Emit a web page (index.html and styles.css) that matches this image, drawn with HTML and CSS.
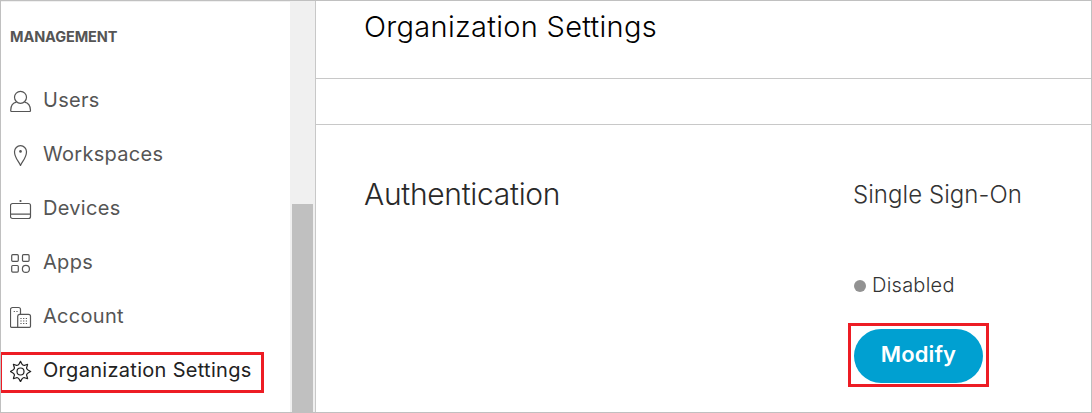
FILE: index.html
```html
<!DOCTYPE html>
<html lang="en">
<head>
<meta charset="utf-8">
<title>Organization Settings</title>
<link rel="stylesheet" href="styles.css">
</head>
<body>
<div class="app">
  <nav class="sidebar">
    <h2 class="group-title"><span>MANAGEMENT</span></h2>
    <a class="nav-item"><svg class="icon" viewBox="0 0 22 22"><circle cx="10.500" cy="7.300" r="6"/><path d="M6.500 12.200C3 12.800.8 15.700.7 20.500q0 1 1 1H19.500q1 0 1-1C20.400 15.700 18 12.800 14.500 12.200"/></svg><span>Users</span></a>
    <a class="nav-item"><svg class="icon" viewBox="0 0 22 22"><path d="M10.500 21.500C9 17.500 4.500 14 4.500 7.700a6 6 0 0 1 12 0C16.500 14 12 17.500 10.500 21.500Z"/><circle class="dot" cx="10.500" cy="7.400" r="1.300"/></svg><span>Workspaces</span></a>
    <a class="nav-item"><svg class="icon" viewBox="0 0 22 22"><path d="M2.500 5.500H18.500a2 2 0 0 1 2 2V18.500a2 2 0 0 1-2 2H2.500a2 2 0 0 1-2-2V7.500a2 2 0 0 1 2-2ZM.5 16.200H20.500"/><circle class="dot" cx="10.500" cy="3" r="1.100"/></svg><span>Devices</span></a>
    <a class="nav-item"><svg class="icon" viewBox="0 0 22 22"><rect x="1.700" y="2.700" width="6.600" height="6.600" rx="1"/><rect x="12.500" y="2.700" width="6.600" height="6.600" rx="1"/><rect x="1.700" y="13.500" width="6.600" height="6.600" rx="1"/><circle cx="15.900" cy="16.900" r="3.500"/></svg><span>Apps</span></a>
    <a class="nav-item"><svg class="icon" viewBox="0 0 22 22"><path d="M7.700 21.300H1.500a1 1 0 0 1-1-1V3.500A2 2 0 0 1 2.500 1.500H8.500a2 2 0 0 1 2 2V8.300M9.500 8.300h9a2 2 0 0 1 2 2v10a1 1 0 0 1-1 1H7.700v-11a2 2 0 0 1 1.800-2Z"/><path class="specks" d="M3.700 5.500h4.200M10.400 12.500h7.800M10.400 15h7.800M10.400 17.500h7.800"/></svg><span>Account</span></a>
    <a class="nav-item active"><svg class="icon" viewBox="0 0 22 22"><path d="M10.500 1.300L11.700 3.600Q13.300 6.300 15.400 5L17.600 4.400 17 6.600Q15.700 8.700 18.400 10.300L20.700 11.500 18.400 12.700Q15.700 14.300 17 16.400L17.600 18.600 15.400 18Q13.300 16.700 11.700 19.400L10.500 21.700 9.300 19.400Q7.700 16.700 5.600 18L3.400 18.600 4 16.400Q5.300 14.300 2.600 12.700L.3 11.500 2.600 10.300Q5.300 8.700 4 6.600L3.400 4.400 5.600 5Q7.700 6.300 9.300 3.600Z"/><circle cx="10.500" cy="11.500" r="3.500"/></svg><span>Organization Settings</span></a>
  </nav>
  <div class="scrollbar"><div class="thumb"></div></div>
  <main class="content">
    <header class="page-header"><h1 class="title">Organization Settings</h1></header>
    <div class="toolbar"></div>
    <section class="settings">
      <h2 class="section-title">Authentication</h2>
      <div class="setting">
        <h3 class="setting-title">Single Sign-On</h3>
        <div class="status"><i class="status-dot"></i><span>Disabled</span></div>
        <div class="highlight"><button class="modify">Modify</button></div>
      </div>
    </section>
  </main>
</div>
</body>
</html>
```
FILE: styles.css
```css
* { box-sizing: border-box; }
body { margin: 0; background: #fff; font-family: Inter, "Liberation Sans", sans-serif; }
h1, h2, h3 { margin: 0; }
span, h1, h2, h3 { white-space: nowrap; }

.app {
  display: flex;
  width: 1092px;
  height: 413px;
  border: 1px solid #c0c0c0;
}

.sidebar { width: 289px; border-top: 1px solid #f0f0f0; }
.group-title {
  height: 71px;
  padding: 26px 0 0 9px;
  font-size: 14.500px;
  line-height: 18px;
  font-weight: 700;
  letter-spacing: -0.100px;
  color: #555;
}
.nav-item {
  display: flex;
  align-items: center;
  height: 54px;
  padding-left: 9px;
  color: #555;
  font-size: 20px;
  line-height: 24px;
  letter-spacing: 0.300px;
}
.nav-item .icon { margin-top: 2px; }
.nav-item span { margin-left: 11px; }
.icon {
  flex: none;
  width: 22px;
  height: 22px;
  fill: none;
  stroke: currentColor;
  stroke-width: 1.200;
  stroke-linejoin: round;
}
.icon .dot { fill: currentColor; stroke: none; }
.icon .specks { stroke-dasharray: 1.200 1.500; }
.nav-item.active {
  width: 263px;
  height: 41px;
  margin-top: 9px;
  padding: 0 0 5px 8px;
  border: 3px solid #ed1c24;
  border-left-width: 1px;
  color: #222;
}

.scrollbar {
  width: 25px;
  padding: 203px 2px 0;
  background: #f0f0f0;
}
.thumb { height: 208px; background: #c0c0c0; }

.content { flex: 1; border-left: 1px solid #c8c8c8; }
.page-header {
  height: 78px;
  padding: 8px 0 0 48px;
  border-bottom: 1px solid #c8c8c8;
}
.title {
  font-size: 29px;
  line-height: 36px;
  font-weight: 300;
  letter-spacing: 0.300px;
  color: #000;
}
.toolbar { height: 46px; border-bottom: 1px solid #c8c8c8; }
.settings { display: flex; padding: 51px 0 0 48px; }
.section-title {
  width: 484px;
  font-size: 30px;
  line-height: 36px;
  font-weight: 300;
  letter-spacing: -0.300px;
  color: #292929;
}
.setting-title {
  padding: 1px 0 0 5px;
  font-size: 24px;
  line-height: 36px;
  font-weight: 300;
  letter-spacing: 0.050px;
  color: #333;
}
.status {
  display: flex;
  align-items: center;
  margin-top: 60px;
  padding-left: 6px;
  font-size: 20px;
  line-height: 24px;
  font-weight: 300;
  letter-spacing: 0.250px;
  color: #333;
}
.status-dot {
  width: 12px;
  height: 12px;
  margin: 2px 6px 0 0;
  border-radius: 50%;
  background: #929292;
}
.highlight {
  width: 141px;
  height: 64px;
  margin-top: 26px;
  padding: 3px;
  border: 3px solid #ed1c24;
}
.modify {
  width: 129px;
  height: 54px;
  padding: 0 0 4px;
  border: 0;
  border-radius: 27px;
  background: #00a0d1;
  color: #fff;
  font-family: inherit;
  font-size: 22px;
  font-weight: 600;
  letter-spacing: 0.100px;
}
```
